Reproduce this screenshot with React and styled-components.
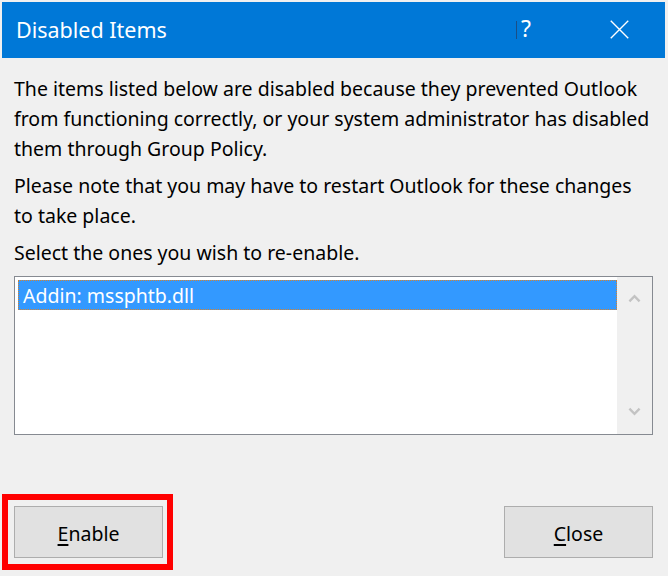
import React from "react";
import styled, { createGlobalStyle } from "styled-components";

const Global = createGlobalStyle`
  html, body {
    margin: 0;
    padding: 0;
    background: #f0f0f0;
  }
  body {
    font-family: "Noto Sans", "Open Sans", sans-serif;
  }
`;

export default () => {
  return (
    <>
      <Global />
      <Window>
        <TitleBar>
          <Title>Disabled Items</Title>
          <Caret />
          <HelpButton>?</HelpButton>
          <CloseIcon viewBox="0 0 24 24">
            <path d="M2 2 L22 22 M22 2 L2 22" stroke="#fff" strokeWidth="1.6" fill="none" />
          </CloseIcon>
        </TitleBar>
        <Content>
          <Para>
            The items listed below are disabled because they prevented Outlook
            from functioning correctly, or your system administrator has disabled
            them through Group Policy.
          </Para>
          <Para>
            Please note that you may have to restart Outlook for these changes
            to take place.
          </Para>
          <Para>Select the ones you wish to re-enable.</Para>
          <ListBox>
            <ListItems>
              <Item selected>Addin: mssphtb.dll</Item>
            </ListItems>
            <ScrollBar>
              <Arrow viewBox="0 0 14 9">
                <path d="M1.5 7.5 L7 2 L12.5 7.5" stroke="#c3c3c3" strokeWidth="2.6" fill="none" />
              </Arrow>
              <Arrow viewBox="0 0 14 9">
                <path d="M1.5 1.5 L7 7 L12.5 1.5" stroke="#c3c3c3" strokeWidth="2.6" fill="none" />
              </Arrow>
            </ScrollBar>
          </ListBox>
          <Footer>
            <Highlight>
              <Button><Label><u>E</u>nable</Label></Button>
            </Highlight>
            <Button><Label><u>C</u>lose</Label></Button>
          </Footer>
        </Content>
      </Window>
    </>
  );
};

const Window = styled.div`
  margin: 2px 0 0 2px;
  width: 663px;
  height: 572px;
  background: #f0f0f0;
  display: flex;
  flex-direction: column;
`
const TitleBar = styled.div`
  height: 56px;
  background: #0078d7;
  display: flex;
  align-items: center;
  color: #fff;
  flex-shrink: 0;
`
const Title = styled.div`
  margin-left: 14px;
  font-size: 21.5px;
  flex: 1;
  margin-top: -1px;
`
const Caret = styled.div`
  width: 1px;
  height: 18px;
  background: #1a4f86;
  margin-right: 4px;
`
const HelpButton = styled.div`
  font-size: 23px;
  width: 14px;
  margin-right: 74px;
  margin-top: -4px;
`
const CloseIcon = styled.svg`
  width: 21px;
  height: 21px;
  margin-right: 35px;
  margin-top: -2px;
`
const Content = styled.div`
  flex: 1;
  display: flex;
  flex-direction: column;
  padding: 16px 12px 4px 12px;
`
const Para = styled.p`
  margin: 0 0 7px 0;
  font-size: 19.5px;
  line-height: 30px;
  color: #000;
`
const ListBox = styled.div`
  margin-top: 1px;
  height: 152px;
  border: 1px solid #868a91;
  background: #fff;
  display: flex;
  padding: 3px 0 2px 3px;
`
const ListItems = styled.div`
  flex: 1;
  background: #fff;
`
const Item = styled.div`
  height: 30px;
  box-sizing: border-box;
  padding: 2px 0 0 4px;
  font-size: 19.5px;
  line-height: 26px;
  color: ${p => (p.selected ? "#fff" : "#000")};
  background: ${p => (p.selected ? "#3399ff" : "transparent")};
  border: 1px dotted ${p => (p.selected ? "#d9822b" : "transparent")};
`
const ScrollBar = styled.div`
  width: 35px;
  background: #f0f0f0;
  margin: -3px 0 -2px 0;
  display: flex;
  flex-direction: column;
  justify-content: space-between;
  align-items: center;
  padding: 17px 0 18px 0;
`
const Arrow = styled.svg`
  width: 13px;
  height: 9px;
`
const Footer = styled.div`
  margin-top: auto;
  display: flex;
  justify-content: space-between;
  align-items: center;
`
const Highlight = styled.div`
  margin-left: -12px;
  border: 6px solid #ff0000;
  padding: 6px 4px 6px 6px;
  display: flex;
`
const Button = styled.div`
  width: 147px;
  height: 50px;
  background: #e1e1e1;
  border: 1px solid #adadad;
  display: flex;
  align-items: center;
  justify-content: center;
  font-size: 19.5px;
  line-height: 26px;
  color: #000;
`
const Label = styled.span`
  padding-top: 3px;
  u {
    text-decoration-thickness: 2px;
    text-underline-offset: 3px;
  }
`
